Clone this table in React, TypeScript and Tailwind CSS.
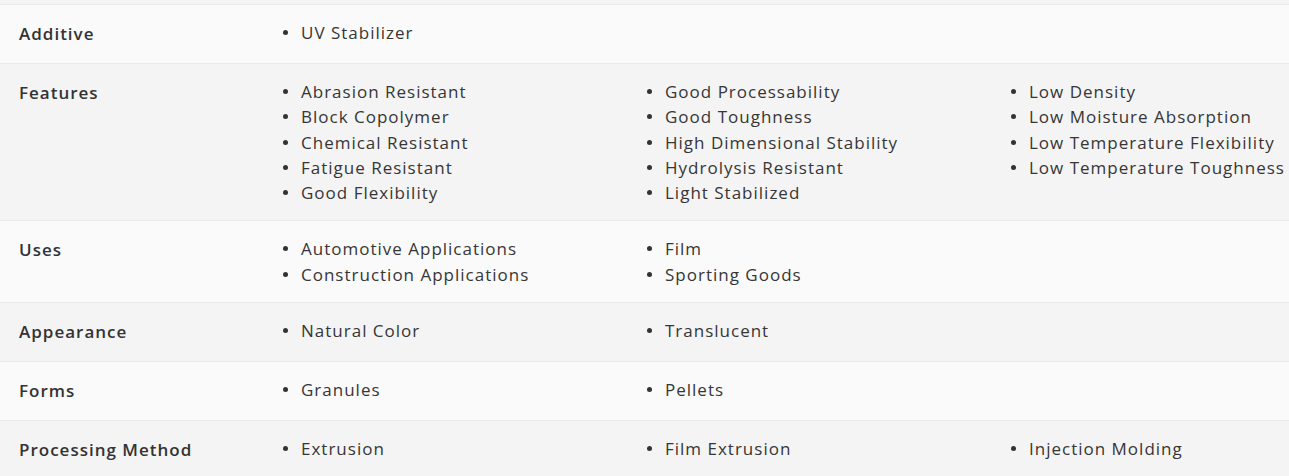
const rows: { label: string; cols: string[][] }[] = [
  { label: 'Additive', cols: [['UV Stabilizer']] },
  {
    label: 'Features',
    cols: [
      ['Abrasion Resistant', 'Block Copolymer', 'Chemical Resistant', 'Fatigue Resistant', 'Good Flexibility'],
      ['Good Processability', 'Good Toughness', 'High Dimensional Stability', 'Hydrolysis Resistant', 'Light Stabilized'],
      ['Low Density', 'Low Moisture Absorption', 'Low Temperature Flexibility', 'Low Temperature Toughness'],
    ],
  },
  { label: 'Uses', cols: [['Automotive Applications', 'Construction Applications'], ['Film', 'Sporting Goods']] },
  { label: 'Appearance', cols: [['Natural Color'], ['Translucent']] },
  { label: 'Forms', cols: [['Granules'], ['Pellets']] },
  { label: 'Processing Method', cols: [['Extrusion'], ['Film Extrusion'], ['Injection Molding']] },
];

export default function App() {
  return (
    <div
      className="w-[1289px] h-[476px] overflow-hidden bg-[#fafafa] text-[#363636]"
      style={{ fontFamily: '"Open Sans", sans-serif' }}
    >
      {/* tail of the previous row */}
      <div className="h-[5px] bg-[#f4f4f4] border-b border-[#ebebeb]" />
      {rows.map((row, i) => (
        <div
          key={row.label}
          className={`flex border-b border-[#ebebeb] ${i % 2 === 0 ? 'bg-[#fafafa]' : 'bg-[#f4f4f4]'}`}
        >
          <div className="w-[265px] shrink-0 pl-[19px] py-[15px] text-[17px] leading-[28px] font-semibold tracking-[1px] text-[#333333]">
            {row.label}
          </div>
          <div className="flex py-[15px]">
            {row.cols.map((col, j) => (
              <ul key={j} className="w-[364px] shrink-0">
                {col.map(item => (
                  <li key={item} className="flex items-center text-[17px] leading-[25.25px] tracking-[1px] whitespace-nowrap">
                    <span className="w-[5px] h-[5px] rounded-full bg-[#333333] ml-[18px] mr-[13px] shrink-0" />
                    {item}
                  </li>
                ))}
              </ul>
            ))}
          </div>
        </div>
      ))}
    </div>
  );
}
